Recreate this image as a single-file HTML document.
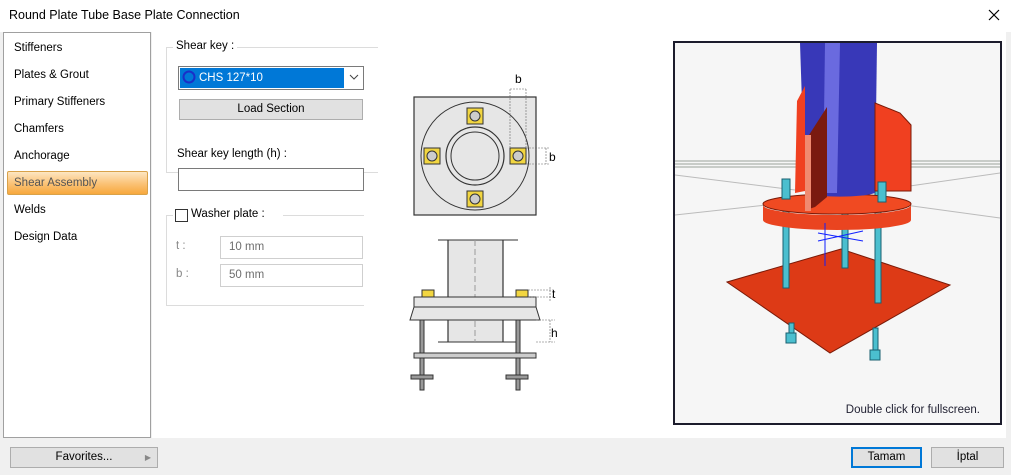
<!DOCTYPE html>
<html><head><meta charset="utf-8"><style>
*{box-sizing:border-box;margin:0;padding:0}
body{width:1011px;height:475px;background:#f0f0f0;font-family:"Liberation Sans",sans-serif;font-size:11.5px;color:#000;position:relative;overflow:hidden}
.abs{position:absolute}
.title{left:0;top:0;width:1011px;height:32px;background:#fff;}
.title span{position:absolute;left:9px;top:8px;font-size:12.5px}
.main{left:152px;top:32px;width:854px;height:406px;background:#fff}
.list{left:3px;top:32px;width:148px;height:406px;background:#fff;border:1px solid #a0a0a0}
.item{position:absolute;left:10px}
.sel{position:absolute;left:3px;top:138px;width:141px;height:24px;border:1px solid #d9a24a;border-radius:2px;background:linear-gradient(#fde6c2,#fbc47a 50%,#f7a83d);}
.grp{border:1px solid #dcdcdc}
.btn{background:#e1e1e1;border:1px solid #adadad;text-align:center}
.inp{background:#fff;border:1px solid #7a7a7a}
.dis{background:#fff;border:1px solid #cfcfcf;color:#6d6d6d;padding-left:8px;line-height:20px}
</style></head><body>
<div class="abs title"><span>Round Plate Tube Base Plate Connection</span>
<svg class="abs" style="left:988px;top:9px" width="12" height="12"><path d="M1 1L11 11M11 1L1 11" stroke="#000" stroke-width="1.2"/></svg></div>
<div class="abs main"></div>
<div class="abs list">
<div class="item" style="top:9px">Stiffeners</div>
<div class="item" style="top:36px">Plates &amp; Grout</div>
<div class="item" style="top:63px">Primary Stiffeners</div>
<div class="item" style="top:90px">Chamfers</div>
<div class="item" style="top:117px">Anchorage</div>
<div class="sel"></div>
<div class="item" style="top:144px;color:#555">Shear Assembly</div>
<div class="item" style="top:171px">Welds</div>
<div class="item" style="top:198px">Design Data</div>
</div>

<div class="abs grp" style="left:166px;top:47px;width:212px;height:126px;border-right:none;border-bottom:1px solid #dcdcdc"></div>
<div class="abs" style="left:173px;top:40px;background:#fff;padding:0 3px">Shear key :</div>
<div class="abs inp" style="left:178px;top:66px;width:186px;height:24px"></div>
<div class="abs" style="left:180px;top:68px;width:164px;height:20px;background:#0078d7;color:#fff;line-height:20px;padding-left:19px">CHS 127*10</div>
<svg class="abs" style="left:182px;top:70px" width="14" height="14"><circle cx="7" cy="7" r="5.5" fill="none" stroke="#1a2fc8" stroke-width="2"/></svg>
<svg class="abs" style="left:349px;top:74px" width="10" height="6"><path d="M1 1L5 5L9 1" fill="none" stroke="#444"/></svg>
<div class="abs btn" style="left:179px;top:99px;width:184px;height:21px;line-height:19px">Load Section</div>
<div class="abs" style="left:177px;top:148px">Shear key length (h) :</div>
<div class="abs inp" style="left:178px;top:168px;width:186px;height:23px"></div>
<div class="abs grp" style="left:166px;top:215px;width:198px;height:91px;border-right:none"></div>
<div class="abs" style="left:173px;top:207px;background:#fff;height:16px;width:110px"></div>
<div class="abs" style="left:175px;top:209px;width:13px;height:13px;border:1px solid #333;background:#fff"></div>
<div class="abs" style="left:191px;top:208px">Washer plate :</div>
<div class="abs" style="left:176px;top:240px;color:#888">t :</div>
<div class="abs dis" style="left:220px;top:236px;width:143px;height:23px">10 mm</div>
<div class="abs" style="left:176px;top:268px;color:#888">b :</div>
<div class="abs dis" style="left:220px;top:264px;width:143px;height:23px">50 mm</div>

<svg class="abs" style="left:400px;top:65px" width="170" height="330" font-family="Liberation Sans" font-size="12">
<rect x="14" y="32" width="122" height="118" fill="#e6e6e6" stroke="#333" stroke-width="1.2"/>
<circle cx="75" cy="91" r="54" fill="none" stroke="#333"/>
<circle cx="75" cy="91" r="29" fill="none" stroke="#333" stroke-width="1.2"/>
<circle cx="75" cy="91" r="24" fill="none" stroke="#333"/>
<g fill="#f2d641" stroke="#333">
<rect x="67" y="43" width="16" height="16"/>
<rect x="67" y="126" width="16" height="16"/>
<rect x="24" y="83" width="16" height="16"/>
<rect x="110" y="83" width="16" height="16"/>
</g>
<g fill="#ccc" stroke="#333"><circle cx="75" cy="51" r="5"/><circle cx="75" cy="134" r="5"/><circle cx="32" cy="91" r="5"/><circle cx="118" cy="91" r="5"/></g>
<path d="M110 24V83M126 24V83M110 24H126M126 83H150M126 99H150M146 83V99" stroke="#666" stroke-width=".6" stroke-dasharray="2 1" fill="none"/>
<text x="115" y="18">b</text><text x="149" y="96">b</text>
<rect x="48" y="175" width="55" height="102" fill="#e6e6e6"/>
<path d="M48 175V232M103 175V232M48 255V277M103 255V277" stroke="#333" stroke-width="1.2"/>
<path d="M38 175H118M38 277H118" stroke="#333"/>
<path d="M75 175V277" stroke="#999" stroke-dasharray="6 3"/>
<rect x="14" y="232" width="122" height="10" fill="#e6e6e6" stroke="#333"/>
<path d="M10 255L14 242H136L140 255Z" fill="#e6e6e6" stroke="#333"/>
<rect x="20" y="255" width="4" height="70" fill="#999" stroke="#333"/>
<rect x="116" y="255" width="4" height="70" fill="#999" stroke="#333"/>
<rect x="14" y="288" width="122" height="5" fill="#ccc" stroke="#333"/>
<rect x="11" y="310" width="22" height="4" fill="#999" stroke="#333"/><rect x="106" y="310" width="22" height="4" fill="#999" stroke="#333"/>
<rect x="22" y="225" width="12" height="7" fill="#f2d641" stroke="#333"/><rect x="116" y="225" width="12" height="7" fill="#f2d641" stroke="#333"/>
<path d="M128 225H155M128 232H155M150 222V236M136 255H155M136 277H155M150 255V277" stroke="#666" stroke-width=".6" stroke-dasharray="2 1"/>
<text x="152" y="233">t</text><text x="151" y="272">h</text>
</svg>

<div class="abs" style="left:673px;top:41px;width:329px;height:384px;border:2px solid #1c1c2c;background:#f6f6f6;overflow:hidden">
<svg width="325" height="380" style="position:absolute;left:0;top:0">
<g stroke="#bbb" fill="none"><path d="M0 118H325M0 121H325M0 124H325" stroke="#c8ccc8" stroke-width="2"/><path d="M0 132L120 147M325 130L200 148M0 172L110 160M325 175L230 162"/></g>
<path d="M52 239L166 206L275 242L155 310Z" fill="#dd3a16" stroke="#7a1a08"/>
<g fill="#4bbfcf" stroke="#1a6070"><rect x="108" y="140" width="6" height="105"/><rect x="200" y="145" width="6" height="115"/><rect x="167" y="145" width="6" height="80"/><rect x="114" y="280" width="5" height="18"/><rect x="198" y="285" width="5" height="30"/><rect x="111" y="290" width="10" height="10"/><rect x="195" y="307" width="10" height="10"/></g>
<path d="M88 162A74 10 0 0 0 236 162V177A74 10 0 0 1 88 177Z" fill="#ea4420"/>
<ellipse cx="162" cy="161" rx="74" ry="10" fill="#f04a22" stroke="#7a1a08"/>
<path d="M125 0H202L200 150A38 6 0 0 1 130 150Z" fill="#3838b8"/>
<path d="M150 0H165L162 150H148Z" fill="#8080f0" opacity=".7"/>
<path d="M122 58L130 43V148L120 150Z" fill="#f04020"/>
<path d="M200 60L225 70L236 82V148L200 148Z" fill="#f04020" stroke="#7a1a08"/>
<path d="M134 92L152 64V154L140 164L134 166Z" fill="#7a1a10"/>
<path d="M130 92H136V168H130Z" fill="#f08a70"/>
<g fill="#4bbfcf" stroke="#1a6070"><rect x="107" y="136" width="8" height="20"/><rect x="203" y="139" width="8" height="20"/></g>
<path d="M150 180V223M143 190L188 198M143 198L188 188" stroke="#1020ff"/>
</svg>
<div style="position:absolute;right:20px;bottom:7px;color:#223">Double click for fullscreen.</div>
</div>

<div class="abs btn" style="left:10px;top:447px;width:148px;height:21px;line-height:19px">Favorites...<span style="position:absolute;right:6px;top:0;color:#888;font-size:8px">▶</span></div>
<div class="abs btn" style="left:851px;top:447px;width:71px;height:21px;line-height:17px;border:2px solid #0078d7">Tamam</div>
<div class="abs btn" style="left:931px;top:447px;width:73px;height:21px;line-height:19px">İptal</div>
</body></html>
